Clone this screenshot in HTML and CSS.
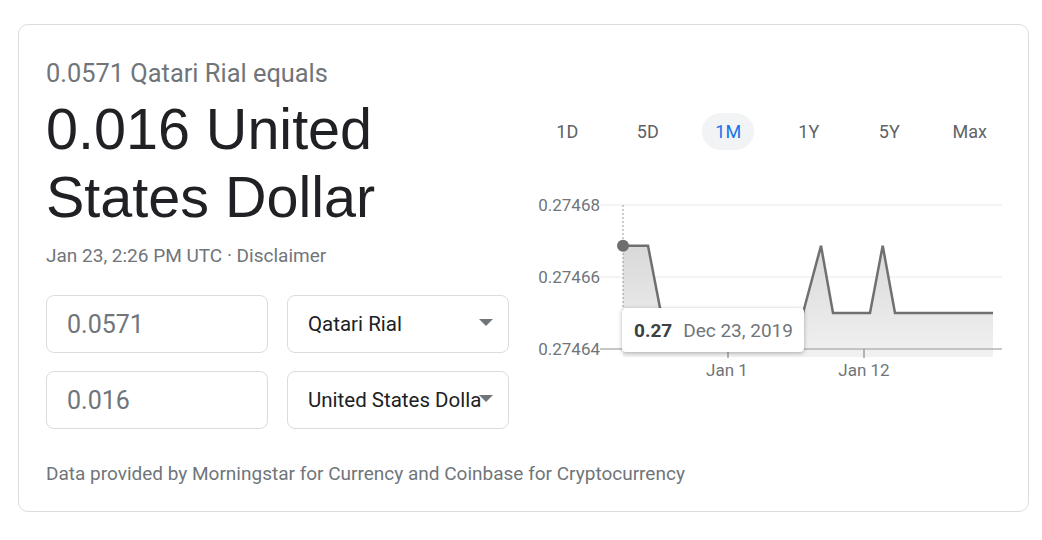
FILE: index.html
```html
<!DOCTYPE html>
<html lang="en">
<head>
  <meta charset="UTF-8" />
  <meta name="viewport" content="width=device-width, initial-scale=1.0" />
  <title>Currency converter</title>
  <link rel="stylesheet" href="styles.css">
</head>
<body>
  <div class="card">
    <div class="main">
      <div class="left">
        <div class="eq">0.0571 Qatari Rial equals</div>
        <div class="result">0.016 United States Dollar</div>
        <div class="time">Jan 23, 2:26 PM UTC · Disclaimer</div>

        <div class="fields">
          <div class="box amount">0.0571</div>
          <div class="box pick"><span class="pick-text">Qatari Rial</span><span class="arrow"></span></div>
          <div class="box amount">0.016</div>
          <div class="box pick"><span class="pick-text">United States Dollar</span><span class="arrow"></span></div>
        </div>
      </div>

      <div class="chart-col">
        <div class="tabs">
          <span class="tab">1D</span>
          <span class="tab">5D</span>
          <span class="tab active">1M</span>
          <span class="tab">1Y</span>
          <span class="tab">5Y</span>
          <span class="tab">Max</span>
        </div>

        <div class="chart">
          <svg width="483" height="195" viewBox="0 0 483 195">
            <defs>
              <linearGradient id="fill" x1="0" y1="0" x2="0" y2="1">
                <stop offset="0" stop-color="#d9d9d9" />
                <stop offset="1" stop-color="#f1f1f1" />
              </linearGradient>
            </defs>
            <!-- grid -->
            <line x1="73" y1="15" x2="475" y2="15" stroke="#f1f1f1" stroke-width="1.5" />
            <line x1="73" y1="87" x2="475" y2="87" stroke="#f1f1f1" stroke-width="1.5" />
            <!-- area + line -->
            <path d="M96,55.7 L121,55.7 L134,123 L276,123 L294,55.7 L306,123 L343,123 L355.7,55.7 L368,123 L466,123 L466,167 L96,167 Z" fill="url(#fill)" />
            <line x1="96" y1="15" x2="96" y2="159" stroke="#9a9a9a" stroke-width="1" stroke-dasharray="2,2" />
            <path d="M96,55.7 L121,55.7 L134,123 L276,123 L294,55.7 L306,123 L343,123 L355.7,55.7 L368,123 L466,123" fill="none" stroke="#707070" stroke-width="2.5" />
            <circle cx="96" cy="55.7" r="6" fill="#6e6e6e" />
            <!-- axis -->
            <line x1="73" y1="159" x2="475" y2="159" stroke="#b5b5b5" stroke-width="1.5" />
            <line x1="201" y1="159" x2="201" y2="168" stroke="#9e9e9e" stroke-width="1.5" />
            <line x1="337" y1="159" x2="337" y2="168" stroke="#9e9e9e" stroke-width="1.5" />
            <!-- labels -->
            <text class="ylab" x="73" y="21" text-anchor="end">0.27468</text>
            <text class="ylab" x="73" y="93" text-anchor="end">0.27466</text>
            <text class="ylab" x="73" y="165" text-anchor="end">0.27464</text>
            <text class="xlab" x="200" y="186" text-anchor="middle">Jan 1</text>
            <text class="xlab" x="337" y="186" text-anchor="middle">Jan 12</text>
          </svg>
          <div class="tip"><b>0.27</b><span>Dec 23, 2019</span></div>
        </div>
      </div>
    </div>

    <div class="source">Data provided by Morningstar for Currency and Coinbase for Cryptocurrency</div>
  </div>
</body>
</html>
```

FILE: styles.css
```css
body { margin: 0; font-family: Roboto, "Liberation Sans", Arial, sans-serif; background: #fff; }

.card { width: 1011px; margin: 24px 0 0 18px; box-sizing: border-box; border: 1px solid #dadce0; border-radius: 10px; padding: 33px 18px 26px 27px; }
.main { display: flex; gap: 18px; }
.left { width: 463px; }

.eq { font-size: 25.4px; line-height: 30px; color: #70757a; }
.result { margin-top: 7px; font-family: "Liberation Sans", Arial, sans-serif; font-size: 57.5px; line-height: 68px; color: #202124; }
.time { margin-top: 14px; font-size: 19px; line-height: 22px; color: #70757a; }

.fields { margin-top: 28px; display: grid; grid-template-columns: 222px 222px; column-gap: 19px; row-gap: 18px; }
.box { height: 58px; box-sizing: border-box; border: 1px solid #dadce0; border-radius: 8px; display: flex; align-items: center; padding: 0 15px 0 20px; }
.amount { font-size: 25px; color: #70757a; }
.pick { font-size: 20.5px; color: #202124; }
.pick-text { flex: 1; overflow: hidden; white-space: nowrap; margin-right: -3px; }
.arrow { width: 0; height: 0; border-left: 7px solid transparent; border-right: 7px solid transparent; border-top: 7px solid #70757a; margin-top: -4px; }

.chart-col { width: 483px; }
.tabs { margin-top: 55px; display: grid; grid-template-columns: repeat(6, 1fr); }
.tab { justify-self: center; height: 37px; line-height: 37px; padding: 0 13px; border-radius: 19px; font-size: 18px; color: #5f6368; }
.tab.active { background: #f1f3f4; color: #1a73e8; }

.chart { position: relative; margin-top: 40px; height: 195px; }
.chart svg { display: block; }
.ylab { font-family: Roboto, sans-serif; font-size: 17px; fill: #70757a; }
.xlab { font-family: Roboto, sans-serif; font-size: 17px; fill: #70757a; }

.tip { position: absolute; left: 95px; top: 118px; width: 182px; height: 44px; box-sizing: border-box; background: #fff; border-radius: 4px; box-shadow: 0 1px 4px rgba(0,0,0,0.3); padding-left: 12px; display: flex; align-items: center; gap: 11px; font-size: 19px; color: #70757a; }
.tip b { color: #3c4043; }

.source { margin-top: 34px; font-size: 19px; line-height: 22px; color: #70757a; }
```
